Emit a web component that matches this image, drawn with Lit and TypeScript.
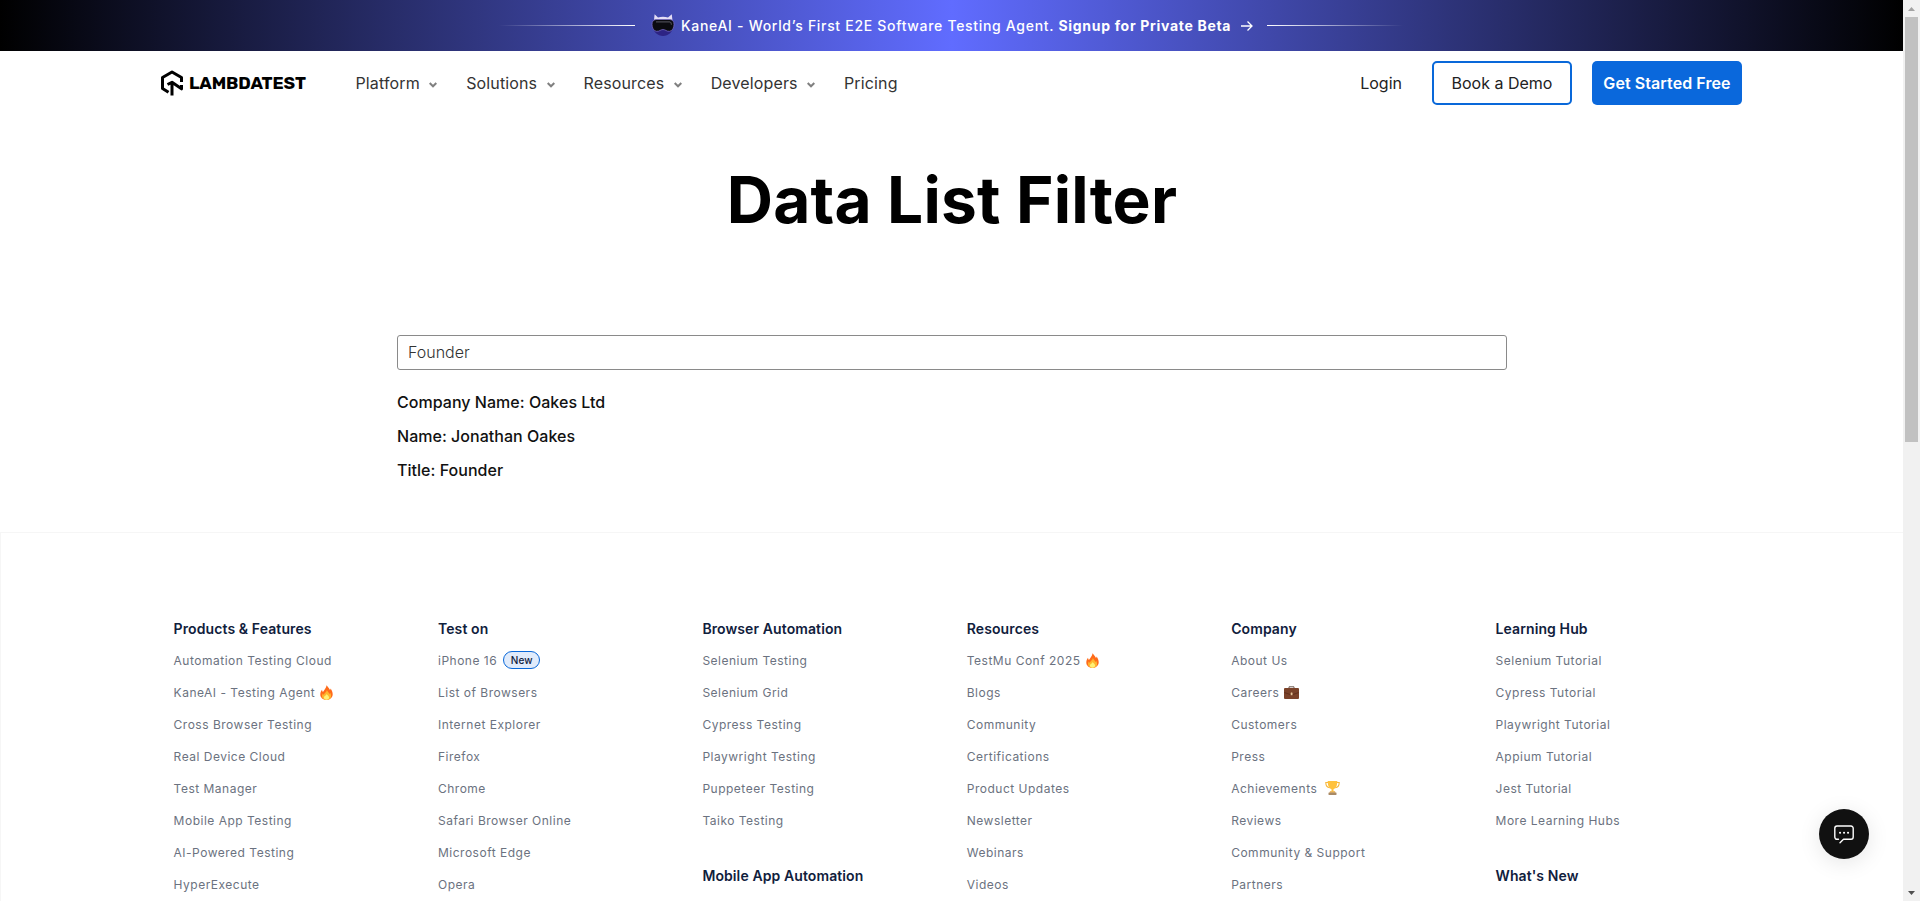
import { LitElement, html, css } from "lit";
import { customElement } from "lit/decorators.js";

const fire = html`<svg class="fire" width="13" height="15" viewBox="0 0 13 15"><path fill="#ff6b1a" d="M6.6 0.2C7.4 1.6 9.3 3 10 5.1c.3-.5.5-1 .5-1.7 1.300 1.500 2.200 3.600 2.200 5.800 0 3.500-2.800 5.600-6.200 5.600S.3 12.600.3 9.400C.3 7.500 1.100 6 2 4.800c.1 1 .4 1.700.9 2.100C3.900 5.300 6.300 3.200 6.600.2z"/><path fill="#ffb62e" d="M6.900 5c.5 1.700 2 2.400 2.700 4 .3-.4.5-.8.5-1.300 1 1.700 1.300 3.200.7 4.700-.7 1.600-2.200 2.400-4.300 2.400-2.600 0-4.500-1.600-4.500-3.900 0-1 .3-1.800.8-2.500.2.600.5 1 1 1.300C4.400 8.100 6.600 7.200 6.900 5z"/><path fill="#fff176" d="M6.700 9c.3 1.100 2.400 1.900 2.400 3.600 0 1.300-1.100 2.100-2.600 2.100s-2.600-.8-2.600-2.200C3.900 11.100 6.400 10.600 6.700 9z"/></svg>`;

const briefcase = html`<svg class="case" width="15" height="13" viewBox="0 0 15 13"><path d="M5 2.200V.8h5v1.400" fill="none" stroke="#6d5a52" stroke-width="1"/><rect x="0" y="2" width="15" height="11" rx="1" fill="#7a4229"/><path d="M.3 6.500 7.500 9l7.200-2.500" fill="none" stroke="#5a2c19" stroke-width=".8"/><rect x="6.700" y="6.500" width="1.800" height="2.800" rx=".4" fill="#e9c69a"/></svg>`;

const trophy = html`<svg class="cup" width="15" height="14" viewBox="0 0 15 14"><path d="M3.500 1.500H.8c0 3 1.300 5 4 5.200M11.500 1.500h2.700c0 3-1.300 5-4 5.200" fill="none" stroke="#f6b73c" stroke-width="1.100"/><path d="M2.700 0h9.600c0 4.500-1.300 7.500-3.800 8.200v2.300h-2V8.200C4 7.500 2.700 4.500 2.700 0z" fill="#ffc23e"/><path d="M5 10.300h5l.5 1.500h-6z" fill="#e8a93a"/><rect x="3.500" y="11.600" width="8" height="2.400" rx=".4" fill="#a98a66"/></svg>`;

const pill = html`<span class="pill">New</span>`;

type Item = string | [string, unknown];
type Group = { title: string; items: Item[] };

const columns: Group[][] = [
  [{ title: "Products & Features", items: ["Automation Testing Cloud", ["KaneAI - Testing Agent", fire], "Cross Browser Testing", "Real Device Cloud", "Test Manager", "Mobile App Testing", "AI-Powered Testing", "HyperExecute"] }],
  [{ title: "Test on", items: [["iPhone 16", pill], "List of Browsers", "Internet Explorer", "Firefox", "Chrome", "Safari Browser Online", "Microsoft Edge", "Opera"] }],
  [
    { title: "Browser Automation", items: ["Selenium Testing", "Selenium Grid", "Cypress Testing", "Playwright Testing", "Puppeteer Testing", "Taiko Testing"] },
    { title: "Mobile App Automation", items: [] },
  ],
  [{ title: "Resources", items: [["TestMu Conf 2025", fire], "Blogs", "Community", "Certifications", "Product Updates", "Newsletter", "Webinars", "Videos"] }],
  [{ title: "Company", items: ["About Us", ["Careers", briefcase], "Customers", "Press", ["Achievements", trophy], "Reviews", "Community & Support", "Partners"] }],
  [
    { title: "Learning Hub", items: ["Selenium Tutorial", "Cypress Tutorial", "Playwright Tutorial", "Appium Tutorial", "Jest Tutorial", "More Learning Hubs"] },
    { title: "What's New", items: [] },
  ],
];

@customElement("site-banner")
class SiteBanner extends LitElement {
  static styles = css`
    :host { display: flex; align-items: center; height: 51px; box-sizing: border-box; padding-left: 499px;
      background: linear-gradient(90deg, #000 0%, #606cff 50%, #000 100%);
      color: #fff; font-size: 14px; font-weight: 500; letter-spacing: 0.69px; white-space: nowrap; }
    .line { width: 136px; height: 1px; flex: none; }
    .left { background: linear-gradient(90deg, transparent, #fff); margin-right: 16px; }
    .right { background: linear-gradient(270deg, transparent, #fff); margin-left: 13px; }
    .bot { flex: none; margin: 0 6px 2px 0; }
    .text { flex: none; width: 552px; }
    .strong { font-weight: 700; }
    .arrow { flex: none; margin-left: 7px; }
  `;
  render() {
    return html`
      <span class="line left"></span>
      <svg class="bot" width="24" height="24" viewBox="0 0 24 24">
        <path d="M2 13.500h20c0 5-4.500 9.500-10 9.500S2 18.500 2 13.500z" fill="#2d2384"/>
        <path d="M2.800 9 3.600 1.200 7 4.500c3-1 7-1 10 0l3.800-3.300L21.600 9z" fill="#e4def5"/>
        <path d="M1 11.500c0-3 1-4.500 4-5h14c3 .5 4 2 4 5s-1.500 6.500-4.500 6.800c-3 .3-4-1.800-6.500-1.800s-3.500 2.100-6.500 1.800C2.500 18 1 14.500 1 11.500z" fill="#0b0b10" stroke="#7467c0" stroke-width=".8"/>
        <path d="M5 8.800h13.500c1.500.5 2 1.500 2 3" fill="none" stroke="#4a4a52" stroke-width="1.200"/>
      </svg>
      <span class="text">KaneAI - World’s First E2E Software Testing Agent. <span class="strong">Signup for Private Beta</span></span>
      <svg class="arrow" width="14" height="12" viewBox="0 0 14 12" fill="none" stroke="#fff" stroke-width="1.300"><path d="M1 6h11M7.500 1.500 12 6l-4.500 4.500"/></svg>
      <span class="line right"></span>`;
  }
}

@customElement("site-nav")
class SiteNav extends LitElement {
  static styles = css`
    :host { display: flex; align-items: center; height: 64px; box-sizing: border-box; padding: 0 161px 0 160px; font-size: 16px; line-height: 20px; color: #333; white-space: nowrap; }
    .logo { display: flex; align-items: center; width: 195.5px; gap: 5px; color: #000; padding-bottom: 1px; box-sizing: border-box; }
    .brand { font: 700 17.5px/20px Rubik, Inter, sans-serif; letter-spacing: -0.12px; }
    .links { display: flex; align-items: center; flex: 1; gap: 29px; letter-spacing: 0.13px; }
    .link { display: flex; align-items: center; gap: 9.4px; }
    .chev { margin-top: 4px; }
    .login { margin-right: 30px; color: #222; }
    .btn { box-sizing: border-box; height: 44px; display: flex; align-items: center; justify-content: center; border-radius: 5px; }
    .demo { width: 140px; border: 2px solid #0968d9; color: #222; margin-right: 20px; }
    .start { width: 150px; background: #0a68dc; color: #fff; font-weight: 600; letter-spacing: 0.08px; }
  `;
  render() {
    const menus = ["Platform", "Solutions", "Resources", "Developers"];
    return html`
      <div class="logo">
        <svg width="24" height="26" viewBox="0 0 24 26" fill="none" stroke="#000" stroke-width="3" stroke-linejoin="round"><path d="M8.500 22.300 2.500 18.500V7.500L12 2l9.500 5.500v4.500"/><path d="M12 25.500V12.500M7.500 14.500 12 12.300l9.500 6.500V15"/></svg>
        <span class="brand">LAMBDATEST</span>
      </div>
      <div class="links">
        ${menus.map((m) => html`<span class="link">${m}<svg class="chev" width="8" height="6" viewBox="0 0 8 6" fill="none" stroke="#808080" stroke-width="2"><path d="M.7 1 4 4.300 7.300 1"/></svg></span>`)}
        <span class="link">Pricing</span>
      </div>
      <span class="login">Login</span>
      <span class="btn demo">Book a Demo</span>
      <span class="btn start">Get Started Free</span>`;
  }
}

@customElement("data-filter")
class DataFilter extends LitElement {
  static styles = css`
    :host { display: block; height: 417px; box-sizing: border-box; padding: 45px 396px 0 397px; color: #111; }
    .title { margin: 0; text-align: center; font-size: 64px; line-height: 80px; font-weight: 700; letter-spacing: 0.17px; color: #000; }
    .field { display: block; margin-top: 95px; width: 100%; height: 35px; box-sizing: border-box; border: 1px solid #8a8a8a; border-radius: 3px; padding: 0 10px 1px; font: 300 16px Inter, sans-serif; color: #333; background: #fff; outline: none; }
    .rows { display: flex; flex-direction: column; gap: 10px; margin-top: 20px; font-size: 16px; line-height: 24px; font-weight: 500; letter-spacing: 0.03px; }
  `;
  render() {
    return html`
      <h1 class="title">Data List Filter</h1>
      <input class="field" .value=${"Founder"} />
      <div class="rows"><span>Company Name: Oakes Ltd</span><span>Name: Jonathan Oakes</span><span>Title: Founder</span></div>`;
  }
}

@customElement("site-footer")
class SiteFooter extends LitElement {
  static styles = css`
    :host { display: block; box-sizing: border-box; height: 369px; overflow: hidden; border: 1px solid #f6f6f6; border-width: 1px 0 0 1px; padding: 86px 143px 0 172.6px; background: #fff; }
    .grid { display: grid; grid-template-columns: repeat(6, 264.4px); }
    .group { margin-bottom: 30px; }
    .head { margin: 0; font-size: 14px; line-height: 20px; font-weight: 600; letter-spacing: 0.1px; color: #10203c; }
    .item { display: flex; align-items: center; height: 32px; font-size: 12px; letter-spacing: 0.5px; color: #6b7280; white-space: nowrap; }
    .list { padding-top: 5px; }
    .pill { box-sizing: border-box; height: 18px; width: 37px; margin-left: 6px; border: 1px solid #0968d9; border-radius: 9px; background: #e0ebfb; color: #10203c; font-size: 10px; line-height: 17px; text-align: center; font-weight: 500; letter-spacing: 0; }
    .fire { margin-left: 5px; }
    .case { margin-left: 5px; }
    .cup { margin-left: 8px; }
  `;
  render() {
    return html`<div class="grid">
      ${columns.map((groups) => html`<div>
        ${groups.map((g) => html`<div class="group"><h2 class="head">${g.title}</h2>
          <div class="list">${g.items.map((i) => html`<div class="item">${typeof i === "string" ? i : html`<span>${i[0]}</span>${i[1]}`}</div>`)}</div></div>`)}
      </div>`)}
    </div>`;
  }
}

@customElement("app-root")
class AppRoot extends LitElement {
  static styles = css`
    :host { display: flex; position: relative; height: 901px; overflow: hidden; background: #fff; font-family: Inter, sans-serif; }
    .page { flex: 1; min-width: 0; }
    .bar { width: 17px; box-sizing: border-box; background: #f1f1f1; display: flex; flex-direction: column; align-items: center; justify-content: space-between; }
    .track { flex: 1; width: 13px; }
    .thumb { height: 425px; background: #c1c1c1; }
    .arrow { display: block; width: 17px; height: 17px; }
    .chat { position: absolute; left: 1819px; top: 809px; width: 50px; height: 50px; border-radius: 50%; background: #111; box-shadow: 0 4px 22px rgba(0, 0, 0, 0.1); display: flex; align-items: center; justify-content: center; }
  `;
  render() {
    return html`
      <div class="page">
        <site-banner></site-banner>
        <site-nav></site-nav>
        <data-filter></data-filter>
        <site-footer></site-footer>
      </div>
      <div class="bar">
        <svg class="arrow" viewBox="0 0 17 17"><path d="M5 11h7L8.500 7z" fill="#a3a3a3"/></svg>
        <div class="track"><div class="thumb"></div></div>
        <svg class="arrow" viewBox="0 0 17 17"><path d="M5 7h7l-3.500 4z" fill="#505050"/></svg>
      </div>
      <div class="chat">
        <svg width="20" height="19" viewBox="0 0 20 19" fill="none" stroke="#fff" stroke-width="1.400" stroke-linejoin="round" stroke-linecap="round"><path d="M4.500 14.300H3A2.200 2.200 0 0 1 .8 12.100V3.200A2.200 2.200 0 0 1 3 1h14a2.200 2.200 0 0 1 2.200 2.200v8.900a2.200 2.200 0 0 1-2.200 2.200H9.500L6 17.800"/><path d="M6 7.800h.1M10 7.800h.1M14 7.800h.1" stroke-width="2"/></svg>
      </div>`;
  }
}
